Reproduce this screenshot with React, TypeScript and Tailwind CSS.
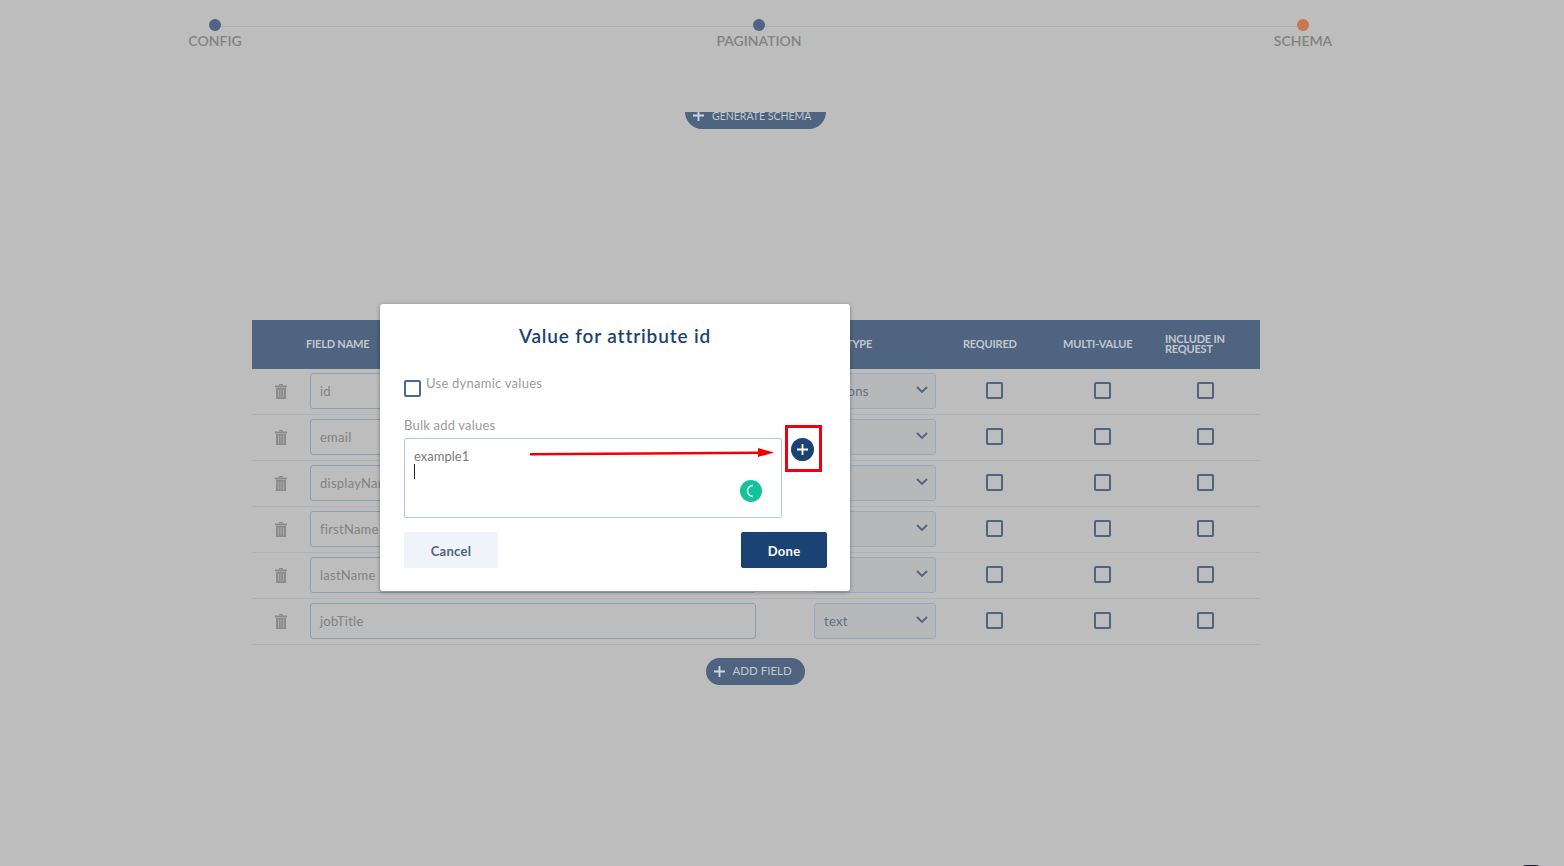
import React from "react";

const font = { fontFamily: '"Lato", "Open Sans", sans-serif' };

function Trash() {
  return (
    <svg width="12" height="15" viewBox="0 0 12 15" fill="#8c8c8c">
      <rect x="4" y="0" width="4" height="1.5" />
      <rect x="0" y="1.5" width="12" height="2" />
      <path d="M1 4h10v11H1z" />
      <rect x="3" y="5.5" width="1" height="8" fill="#a8a8a8" />
      <rect x="5.5" y="5.5" width="1" height="8" fill="#a8a8a8" />
      <rect x="8" y="5.5" width="1" height="8" fill="#a8a8a8" />
    </svg>
  );
}

function Check() {
  return <div className="-mt-[2px] h-[17px] w-[17px] rounded-[2px] border-2 border-[#4f6480]" />;
}

function Chevron() {
  return (
    <svg width="12" height="8" viewBox="0 0 12 8" fill="none" stroke="#4f6480" strokeWidth="1.8">
      <path d="M1 1l5 5 5-5" />
    </svg>
  );
}

function Plus({ size = 12, color = "#d3d6da" }: { size?: number; color?: string }) {
  return (
    <svg width={size} height={size} viewBox="0 0 12 12" stroke={color} strokeWidth="2">
      <path d="M6 0v12M0 6h12" />
    </svg>
  );
}

function Row({ name, type }: { name: string; type: string }) {
  return (
    <div className="flex h-[46px] items-center border-b border-[#aeb1b5] pb-[1px]">
      <div className="mt-[1px] flex w-[58px] justify-center pr-[1px]">
        <Trash />
      </div>
      <div className="flex h-[36px] w-[446px] items-center rounded-[3px] border border-[#8e9db3] pl-[9px] pt-[1px] text-[13px] tracking-[0.25px] text-[#828282]">
        {name}
      </div>
      <div className="ml-[58px] flex h-[36px] w-[122px] items-center justify-between rounded-[3px] border border-[#9aa9c0] bg-[#b7b8ba] pl-[9px] pr-[7px] text-[13px] tracking-[0.3px] text-[#5f6f85]">
        <span className="mt-[1px]">{type}</span>
        <span className="-mt-[2px]"><Chevron /></span>
      </div>
      <div className="flex w-[116px] justify-center"><Check /></div>
      <div className="flex w-[100px] justify-center"><Check /></div>
      <div className="ml-[1px] flex w-[104px] justify-center"><Check /></div>
    </div>
  );
}

const rows: [string, string][] = [
  ["id", "options"],
  ["email", "text"],
  ["displayName", "text"],
  ["firstName", "text"],
  ["lastName", "text"],
  ["jobTitle", "text"],
];

export default function App() {
  return (
    <div className="relative h-[866px] w-full overflow-hidden bg-[#bdbdbd]" style={font}>
      <div className="pl-[165px] pt-[19px]">
        <div className="ml-[44px] flex w-[1100px] items-center">
          <div className="h-3 w-3 rounded-full bg-[#4f6480]" />
          <div className="mt-[2px] h-px flex-1 bg-[#aeaeae]" />
          <div className="h-3 w-3 rounded-full bg-[#4f6480]" />
          <div className="mt-[2px] h-px flex-1 bg-[#aeaeae]" />
          <div className="h-3 w-3 rounded-full bg-[#c9774e]" />
        </div>
        <div className="mt-[1px] flex h-[18px] w-[1188px] items-center justify-between text-[14px] font-semibold leading-[18px] text-[#828282]">
          <span className="w-[100px] text-center">CONFIG</span>
          <span className="w-[100px] text-center">PAGINATION</span>
          <span className="w-[100px] text-center">SCHEMA</span>
        </div>
      </div>

      <div className="ml-[685px] mt-[62px] flex h-[17px] items-end overflow-hidden">
        <div className="flex h-[34px] w-[141px] shrink-0 items-start rounded-full bg-[#4f6480] pl-[8px] text-[10.5px] text-[#c6c9ce]">
          <span className="mt-[15px]"><Plus size={11} /></span>
          <span className="ml-[8px] mt-[13px] leading-[16px]">GENERATE SCHEMA</span>
        </div>
      </div>

      <div className="ml-[252px] mt-[191px] w-[1008px]">
        <div className="flex h-[49px] items-center bg-[#4f6480] text-[11px] font-bold tracking-[-0.2px] text-[#c3c7cd]">
          <div className="w-[54px]" />
          <div className="w-[540px]">FIELD NAME</div>
          <div className="w-[117px]">TYPE</div>
          <div className="w-[100px]">REQUIRED</div>
          <div className="w-[102px]">MULTI-VALUE</div>
          <div className="-mt-[2px] w-[95px] leading-[10px]">INCLUDE IN<br />REQUEST</div>
        </div>
        {rows.map(([n, t]) => (
          <Row key={n} name={n} type={t} />
        ))}
        <div className="mt-[13px] flex justify-center pr-[2px]">
          <div className="flex h-[27px] w-[99px] items-center rounded-full bg-[#4f6480] pl-[8px] text-[11.5px] text-[#c6c9ce]">
            <Plus size={11} />
            <span className="mb-[2px] ml-[8px]">ADD FIELD</span>
          </div>
        </div>
      </div>

      <div className="absolute left-[380px] top-[304px] h-[287px] w-[470px] rounded-[3px] bg-white px-[24px] shadow-[0_1px_4px_rgba(0,0,0,0.35)]">
        <div className="mt-[20px] text-center text-[19px] font-semibold leading-[24px] tracking-[0.85px] text-[#1a4373]">
          Value for attribute id
        </div>
        <div className="mt-[24px] flex items-start">
          <div className="mt-[8px] h-[17px] w-[17px] rounded-[2px] border-2 border-[#456a96]" />
          <span className="ml-[5px] mt-[2px] text-[13px] leading-[18px] tracking-[0.25px] text-[#9a9a9a]">Use dynamic values</span>
        </div>
        <div className="mt-[19px] text-[13px] leading-[18px] tracking-[0.2px] text-[#9a9a9a]">Bulk add values</div>
        <div className="relative mt-[4px] flex items-start">
          <div className="relative h-[80px] w-[378px] rounded-[2px] border border-[#b4c8e4] pl-[9px] pt-[9px] text-[13px] leading-[16px] text-[#7a7a7a]">
            example1
            <div className="h-[15px] w-px bg-[#222]" />
            <div className="absolute left-[335px] top-[41px] flex h-[22px] w-[22px] items-center justify-center rounded-full bg-[#15c39a]">
              <svg width="12" height="14" viewBox="0 0 12 14" fill="none" stroke="#fff" strokeWidth="1.4">
                <path d="M8 1.5A5.5 5.5 0 0 0 8 12.5" />
              </svg>
            </div>
          </div>
          <div className="ml-[9px] flex h-[23px] w-[23px] items-center justify-center rounded-full bg-[#1a4373]">
            <Plus size={11} color="#ffffff" />
          </div>
        </div>
        <div className="mt-[14px] flex w-[423px] justify-between">
          <div className="flex h-[36px] w-[94px] items-center justify-center rounded-[2px] bg-[#f0f3f7] pt-[4px] text-[13px] font-bold tracking-[0.3px] text-[#4a6485]">Cancel</div>
          <div className="flex h-[36px] w-[86px] items-center justify-center rounded-[2px] bg-[#1a4373] pt-[4px] text-[13px] font-bold tracking-[0.3px] text-white">Done</div>
        </div>
        <div className="absolute left-[405px] top-[121px] h-[47px] w-[37px] border-[3px] border-[#ee0010]" />
        <svg className="absolute left-[150px] top-[143px]" width="246" height="14" viewBox="0 0 246 14">
          <path d="M0 6 L230 4.5 L230 7 L0 8.5Z" fill="#f00000" />
          <path d="M228 1 L244 5.5 L228 10Z" fill="#f00000" />
        </svg>
      </div>

      <div className="absolute left-[1522px] top-[865px] h-[4px] w-[18px] rounded-t-full bg-[#1c1c2c]" />
    </div>
  );
}
